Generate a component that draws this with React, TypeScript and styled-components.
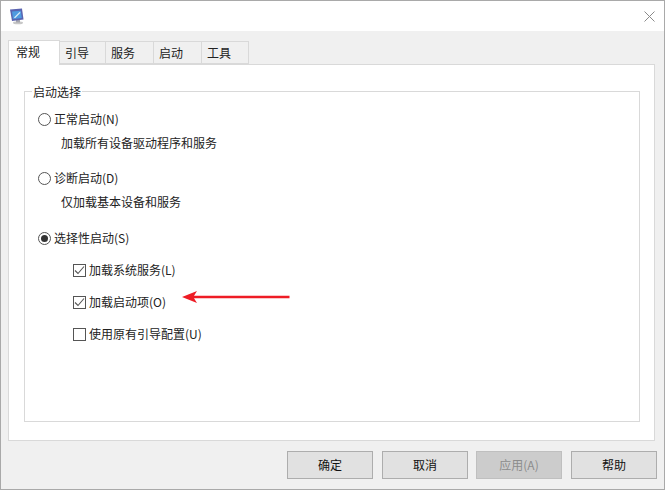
import React from "react";
import styled, { createGlobalStyle } from "styled-components";

const Global = createGlobalStyle`
  html, body { margin: 0; padding: 0; background: #f0f0f0; }
  * { box-sizing: border-box; }
  body { font-family: "Noto Sans CJK SC", "Liberation Sans", sans-serif; font-size: 12px; color: #222; }
`;

const Dialog = styled.div`
  width: 665px;
  height: 490px;
  display: flex;
  flex-direction: column;
  border: 1px solid #a9a9a9;
  background: #f0f0f0;
`;

const TitleBar = styled.div`
  height: 30px;
  background: #fff;
  display: flex;
  align-items: center;
  justify-content: space-between;
  padding: 0 9px 0 8px;
  flex: none;
`;

const Body = styled.div`
  flex: 1;
  display: flex;
  flex-direction: column;
  padding: 9px 7px 0 7px;
`;

const TabStrip = styled.div`
  display: flex;
  height: 24px;
  align-items: flex-end;
  position: relative;
  z-index: 1;
`;

const Tab = styled.div<{ $active?: boolean; $width: number }>`
  width: ${(p) => p.$width}px;
  height: ${(p) => (p.$active ? 25 : 23)}px;
  margin-bottom: ${(p) => (p.$active ? -1 : 0)}px;
  background: ${(p) => (p.$active ? "#fff" : "#f0f0f0")};
  border: 1px solid #d9d9d9;
  border-bottom: ${(p) => (p.$active ? "none" : "1px solid #d9d9d9")};
  border-left-width: ${(p) => (p.$active ? 1 : 0)}px;
  display: flex;
  align-items: center;
  padding-left: ${(p) => (p.$active ? 7 : 5)}px;
  padding-bottom: ${(p) => (p.$active ? 2 : 0)}px;
  line-height: 16px;
`;

const TabPanel = styled.div`
  width: 647px;
  height: 377px;
  background: #fff;
  border: 1px solid #d9d9d9;
  padding: 18px 15px 0 15px;
`;

const Group = styled.fieldset`
  margin: 0;
  width: 616px;
  height: 339px;
  border: 1px solid #d9d9d9;
  padding: 0 0 0 13px;
  min-inline-size: 0;
`;

const GroupTitle = styled.legend`
  padding: 0 1px;
  margin-left: -6px;
  height: 16px;
  line-height: 18px;
  font-size: 12px;
`;

const Option = styled.label`
  display: flex;
  align-items: center;
  height: 16px;
  line-height: 16px;
  gap: 3px;
`;

const RadioCircle = styled.span<{ $checked?: boolean }>`
  width: 13px;
  height: 13px;
  border: 1px solid #555;
  border-radius: 50%;
  background: #fff;
  display: flex;
  align-items: center;
  justify-content: center;
  flex: none;
  &::after {
    content: "";
    width: 7px;
    height: 7px;
    border-radius: 50%;
    background: ${(p) => (p.$checked ? "#333" : "transparent")};
  }
`;

const Description = styled.div`
  margin: 8px 0 0 23px;
  height: 16px;
  line-height: 16px;
`;

const RadioBlock = styled.div<{ $top: number }>`
  margin-top: ${(p) => p.$top}px;
`;

const Checks = styled.div`
  display: flex;
  flex-direction: column;
  gap: 16px;
  margin: 16px 0 0 35px;
`;

const CheckRow = styled.label`
  display: flex;
  align-items: center;
  height: 16px;
  line-height: 16px;
  gap: 3px;
  position: relative;
`;

const Box = styled.span`
  width: 13px;
  height: 13px;
  border: 1px solid #555;
  background: #fff;
  flex: none;
  display: flex;
  align-items: center;
  justify-content: center;
`;

const Arrow = styled.svg`
  position: absolute;
  left: 109px;
  top: -4px;
`;

const Footer = styled.div`
  display: flex;
  justify-content: flex-end;
  gap: 9px;
  margin-top: 10px;
`;

const Btn = styled.button<{ $disabled?: boolean }>`
  width: 86px;
  height: 28px;
  padding: 0;
  margin-left: ${(p) => (p.$disabled ? -1 : 0)}px;
  font: inherit;
  font-size: 12px;
  line-height: 16px;
  color: ${(p) => (p.$disabled ? "#8c8c8c" : "#111")};
  background: ${(p) => (p.$disabled ? "#cccccc" : "#e1e1e1")};
  border: 1px solid ${(p) => (p.$disabled ? "#bfbfbf" : "#adadad")};
`;

const Check = () => (
  <svg width="11" height="11" viewBox="0 0 11 11">
    <path d="M1 5.5 L4 8.5 L10 1.5" fill="none" stroke="#555" strokeWidth="1.1" />
  </svg>
);

const AppIcon = () => (
  <svg width="16" height="17" viewBox="0 0 16 17">
    <ellipse cx="9" cy="14.8" rx="5" ry="1.5" fill="#c8c8c8" />
    <rect x="7" y="11.5" width="4" height="3" fill="#a6a6ae" />
    <path d="M1 1.5 L13 0.5 L14.5 11.5 L3 13 Z" fill="#5a63b0" />
    <path d="M3 3.5 L11.8 2.8 L12.8 10 L4 11 Z" fill="#4f9be0" />
    <path d="M5 9.5 L10.5 4 L11.5 4.8 L6 10.2 Z" fill="#dcecf9" />
  </svg>
);

const CloseIcon = () => (
  <svg width="11" height="11" viewBox="0 0 11 11">
    <path d="M0.5 0.5 L10.5 10.5 M10.5 0.5 L0.5 10.5" stroke="#8a8a8a" strokeWidth="1" />
  </svg>
);

const tabs: [string, number][] = [
  ["常规", 52],
  ["引导", 46],
  ["服务", 48],
  ["启动", 48],
  ["工具", 47],
];

export default function App() {
  return (
    <>
      <Global />
      <Dialog>
        <TitleBar>
          <AppIcon />
          <CloseIcon />
        </TitleBar>
        <Body>
          <TabStrip>
            {tabs.map(([t, w], i) => (
              <Tab key={t} $active={i === 0} $width={w}>{t}</Tab>
            ))}
          </TabStrip>
          <TabPanel>
            <Group>
              <GroupTitle>启动选择</GroupTitle>
              <RadioBlock $top={12}>
                <Option><RadioCircle />正常启动(N)</Option>
                <Description>加载所有设备驱动程序和服务</Description>
              </RadioBlock>
              <RadioBlock $top={19}>
                <Option><RadioCircle />诊断启动(D)</Option>
                <Description>仅加载基本设备和服务</Description>
              </RadioBlock>
              <RadioBlock $top={20}>
                <Option><RadioCircle $checked />选择性启动(S)</Option>
                <Checks>
                  <CheckRow><Box><Check /></Box>加载系统服务(L)</CheckRow>
                  <CheckRow>
                    <Box><Check /></Box>加载启动项(O)
                    <Arrow width="108" height="14" viewBox="0 0 108 14">
                      <path d="M0 7 L15 1 L12 5.7 L107.5 5.7 L107.5 8.3 L12 8.3 L15 13 Z" fill="#ee1c25" />
                    </Arrow>
                  </CheckRow>
                  <CheckRow><Box />使用原有引导配置(U)</CheckRow>
                </Checks>
              </RadioBlock>
            </Group>
          </TabPanel>
          <Footer>
            <Btn>确定</Btn>
            <Btn>取消</Btn>
            <Btn $disabled>应用(A)</Btn>
            <Btn>帮助</Btn>
          </Footer>
        </Body>
      </Dialog>
    </>
  );
}
